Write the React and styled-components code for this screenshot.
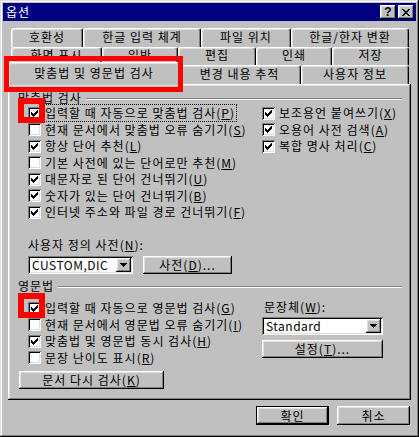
import React from 'react'
import styled, { createGlobalStyle } from 'styled-components'

const GlobalStyle = createGlobalStyle`
  html, body { margin: 0; padding: 0; background: #c0c0c0; }
  body {
    font-family: "Noto Sans CJK KR", "Liberation Sans", sans-serif;
    font-size: 12px;
    line-height: 14px;
    letter-spacing: 1px;
    color: #000;
  }
`

const raised = `
  box-shadow: inset -1px -1px #000, inset 1px 1px #fff, inset -2px -2px #808080, inset 2px 2px #dfdfdf;
`
const sunken = `
  box-shadow: inset 1px 1px #808080, inset -1px -1px #fff, inset 2px 2px #000, inset -2px -2px #dfdfdf;
`

const Window = styled.div`
  width: 419px;
  height: 437px;
  box-sizing: border-box;
  padding: 3px;
  background: #c0c0c0;
  box-shadow: inset -1px -1px #000, inset 1px 1px #dfdfdf, inset -2px -2px #808080, inset 2px 2px #fff;
  display: flex;
  flex-direction: column;
`

const TitleBar = styled.div`
  height: 18px;
  background: #000080;
  color: #fff;
  display: flex;
  align-items: center;
  padding: 0 2px 0 3px;
`

const Title = styled.span`
  flex: 1;
`

const TitleButton = styled.div`
  width: 16px;
  height: 14px;
  box-sizing: border-box;
  background: #c0c0c0;
  ${raised}
  display: flex;
  align-items: center;
  justify-content: center;
  color: #000;
  letter-spacing: 0;
  font: bold 12px/12px "Liberation Sans", sans-serif;
  & + & { margin-left: 2px; }
`

const Body = styled.div`
  flex: 1;
  display: flex;
  flex-direction: column;
  padding: 7px 5px 0;
`

const TabRow = styled.div`
  display: flex;
  align-items: flex-start;
  height: ${p => p.$h}px;
  margin-left: ${p => p.$ml}px;
`

const Tab = styled.div`
  position: relative;
  flex: none;
  box-sizing: border-box;
  width: ${p => p.$w}px;
  height: ${p => (p.$active ? 23 : p.$h)}px;
  margin: ${p => (p.$active ? '-3px -2px 0 -2px' : '0')};
  z-index: ${p => (p.$active ? 2 : 'auto')};
  padding-top: ${p => p.$pt}px;
  text-align: center;
  white-space: nowrap;
  background: #c0c0c0;
  border: 1px solid #fff;
  border-bottom: none;
  border-right-color: #000;
  border-radius: 3px 3px 0 0;
  box-shadow: inset -1px 0 #808080, inset 1px 1px #dfdfdf;
`

const Panel = styled.div`
  position: relative;
  z-index: 1;
  height: 316px;
  box-sizing: border-box;
  padding: 7px 9px 0 10px;
  background: #c0c0c0;
  box-shadow: inset -1px -1px #000, inset 1px 1px #fff, inset -2px -2px #808080, inset 2px 2px #dfdfdf;
  display: flex;
  flex-direction: column;
`

const GroupHeader = styled.div`
  display: flex;
  align-items: center;
  height: 14px;
  margin-top: ${p => p.$mt || 0}px;
`

const Etch = styled.div`
  flex: 1;
  margin: 2px 0 0 4px;
  border-top: 1px solid #808080;
  border-bottom: 1px solid #fff;
`

const CheckGrid = styled.div`
  display: grid;
  grid-template-columns: 234px 1fr;
  margin: ${p => p.$mt || 0}px 0 0 10px;
`

const Column = styled.div`
  display: flex;
  flex-direction: column;
`

const CheckRow = styled.div`
  display: flex;
  align-items: center;
  height: 16.5px;
  white-space: nowrap;
`

const Box = styled.span`
  position: relative;
  flex: none;
  width: 13px;
  height: 13px;
  box-sizing: border-box;
  background: #fff;
  ${sunken}
  display: flex;
  align-items: center;
  justify-content: center;
`

const Label = styled.span`
  margin-left: 3px;
  padding: 1px 1px 1px 0;
  border: 1px dotted ${p => (p.$focus ? '#000' : 'transparent')};
`

const Mn = styled.span`
  text-decoration: underline;
  text-underline-offset: 1px;
`

const RedMark = styled.span`
  position: absolute;
  left: ${p => p.$l}px;
  top: ${p => p.$t}px;
  width: ${p => p.$w}px;
  height: ${p => p.$h}px;
  box-sizing: border-box;
  border: ${p => p.$b}px solid #ff0000;
  pointer-events: none;
  z-index: 3;
`

const FieldLabel = styled.div`
  margin: ${p => p.$mt || 0}px 0 0 ${p => p.$ml || 0}px;
  white-space: nowrap;
`

const FieldRow = styled.div`
  display: flex;
  align-items: center;
  gap: 10px;
  margin: 4px 0 0 10px;
`

const Combo = styled.div`
  width: ${p => p.$w}px;
  height: 18px;
  box-sizing: border-box;
  padding: 2px;
  background: #fff;
  ${sunken}
  display: flex;
  align-items: center;
  margin-top: ${p => p.$mt || 0}px;
`

const ComboText = styled.span`
  flex: 1;
  padding-left: 2px;
  white-space: nowrap;
  letter-spacing: 0.5px;
`

const ComboArrow = styled.span`
  flex: none;
  width: 15px;
  height: 14px;
  box-sizing: border-box;
  background: #c0c0c0;
  ${raised}
  display: flex;
  align-items: center;
  justify-content: center;
`

const Button = styled.div`
  width: ${p => p.$w}px;
  height: ${p => p.$h || 18}px;
  box-sizing: border-box;
  background: #c0c0c0;
  ${raised}
  ${p => (p.$default ? 'border: 1px solid #000;' : '')}
  display: flex;
  align-items: center;
  justify-content: center;
  white-space: nowrap;
  margin: ${p => p.$mt || 0}px 0 0 ${p => p.$ml || 0}px;
`

const Footer = styled.div`
  display: flex;
  justify-content: flex-end;
  gap: 8px;
  margin-top: 6px;
  padding-right: 1px;
`

const Check = () => (
  <svg width="7" height="7" viewBox="0 0 7 7" shapeRendering="crispEdges">
    <path
      fill="#000"
      d="M6 0h1v1h-1z M5 1h2v1h-2z M0 2h1v1h-1z M4 2h3v1h-3z M0 3h2v1h-2z M3 3h3v1h-3z M0 4h5v1h-5z M1 5h3v1h-3z M2 6h1v1h-1z"
    />
  </svg>
)

const Arrow = () => (
  <svg width="7" height="4" viewBox="0 0 7 4" shapeRendering="crispEdges">
    <path fill="#000" d="M0 0h7v1h-7z M1 1h5v1h-5z M2 2h3v1h-3z M3 3h1v1h-1z" />
  </svg>
)

const CloseGlyph = () => (
  <svg width="8" height="7" viewBox="0 0 8 7" shapeRendering="crispEdges">
    <path
      fill="#000"
      d="M0 0h2v1h-2z M6 0h2v1h-2z M1 1h2v1h-2z M5 1h2v1h-2z M2 2h4v1h-4z M3 3h2v1h-2z M2 4h4v1h-4z M1 5h2v1h-2z M5 5h2v1h-2z M0 6h2v1h-2z M6 6h2v1h-2z"
    />
  </svg>
)

const CheckItem = ({ checked, focus, mark, text, k }) => (
  <CheckRow>
    <Box>
      {checked && <Check />}
      {mark && <RedMark $l={-10} $t={-9} $w={27} $h={25} $b={6} />}
    </Box>
    <Label $focus={focus}>
      {text}(<Mn>{k}</Mn>)
    </Label>
  </CheckRow>
)

const tabRows = [
  { h: 19, ml: 3, pt: 1, tabs: [['호환성', 72], ['한글 입력 체계', 118], ['파일 위치', 90], ['한글/한자 변환', 118]] },
  { h: 18, ml: 3, pt: 0, tabs: [['화면 표시', 91], ['일반', 76], ['편집', 78], ['인쇄', 76], ['저장', 77]] },
  { h: 19, ml: 2, pt: 1, tabs: [['맞춤법 및 영문법 검사', 172, true], ['변경 내용 추적', 123], ['사용자 정보', 108]] },
]

const spellLeft = [
  { text: '입력할 때 자동으로 맞춤법 검사', k: 'P', checked: true, focus: true, mark: true },
  { text: '현재 문서에서 맞춤법 오류 숨기기', k: 'S' },
  { text: '항상 단어 추천', k: 'L', checked: true },
  { text: '기본 사전에 있는 단어로만 추천', k: 'M' },
  { text: '대문자로 된 단어 건너뛰기', k: 'U', checked: true },
  { text: '숫자가 있는 단어 건너뛰기', k: 'B', checked: true },
  { text: '인터넷 주소와 파일 경로 건너뛰기', k: 'F', checked: true },
]

const spellRight = [
  { text: '보조용언 붙여쓰기', k: 'X', checked: true },
  { text: '오용어 사전 검색', k: 'A', checked: true },
  { text: '복합 명사 처리', k: 'C', checked: true },
]

const grammarLeft = [
  { text: '입력할 때 자동으로 영문법 검사', k: 'G', checked: true, mark: true },
  { text: '현재 문서에서 영문법 오류 숨기기', k: 'I' },
  { text: '맞춤법 및 영문법 동시 검사', k: 'H', checked: true },
  { text: '문장 난이도 표시', k: 'R' },
]

export default function App() {
  return (
    <>
      <GlobalStyle />
      <Window>
        <TitleBar>
          <Title>옵션</Title>
          <TitleButton>?</TitleButton>
          <TitleButton><CloseGlyph /></TitleButton>
        </TitleBar>
        <Body>
          {tabRows.map((row, i) => (
            <TabRow key={i} $h={row.h} $ml={row.ml}>
              {row.tabs.map(([name, w, active]) => (
                <Tab key={name} $w={w} $h={row.h} $pt={active ? 3 : row.pt} $active={active}>
                  {name}
                  {active && <RedMark $l={-5} $t={-7} $w={179} $h={36} $b={5} />}
                </Tab>
              ))}
            </TabRow>
          ))}
          <Panel>
            <GroupHeader>
              <span>맞춤법 검사</span>
              <Etch />
            </GroupHeader>
            <CheckGrid>
              <Column>
                {spellLeft.map(c => <CheckItem key={c.k} {...c} />)}
              </Column>
              <Column>
                {spellRight.map(c => <CheckItem key={c.k} {...c} />)}
              </Column>
            </CheckGrid>
            <FieldLabel $mt={17.5} $ml={10}>사용자 정의 사전(<Mn>N</Mn>):</FieldLabel>
            <FieldRow>
              <Combo $w={105}>
                <ComboText>CUSTOM,DIC</ComboText>
                <ComboArrow><Arrow /></ComboArrow>
              </Combo>
              <Button $w={89}>사전(<Mn>D</Mn>)...</Button>
            </FieldRow>
            <GroupHeader $mt={5}>
              <span>영문법</span>
              <Etch />
            </GroupHeader>
            <CheckGrid $mt={7}>
              <Column>
                {grammarLeft.map(c => <CheckItem key={c.k} {...c} />)}
              </Column>
              <Column>
                <FieldLabel $ml={2}>문장체(<Mn>W</Mn>):</FieldLabel>
                <Combo $w={121} $mt={3}>
                  <ComboText>Standard</ComboText>
                  <ComboArrow><Arrow /></ComboArrow>
                </Combo>
                <Button $w={121} $mt={5}>설정(<Mn>T</Mn>)...</Button>
              </Column>
            </CheckGrid>
            <Button $w={145} $mt={5} $ml={1}>문서 다시 검사(<Mn>K</Mn>)</Button>
          </Panel>
          <Footer>
            <Button $w={73} $h={19} $default>확인</Button>
            <Button $w={73} $h={19}>취소</Button>
          </Footer>
        </Body>
      </Window>
    </>
  )
}
